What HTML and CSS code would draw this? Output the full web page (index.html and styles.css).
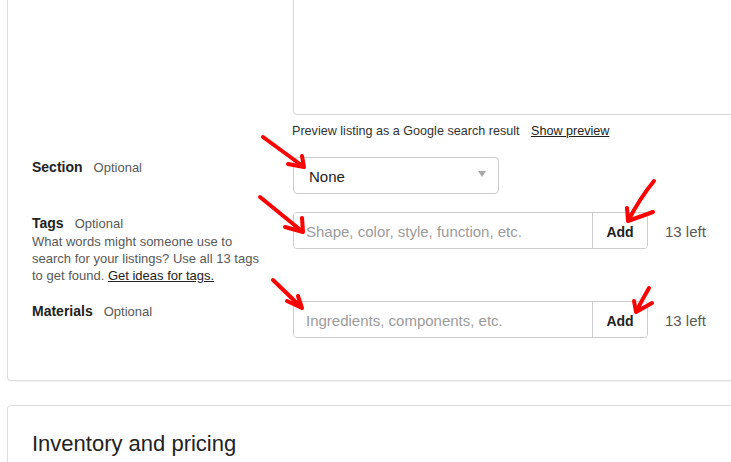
FILE: index.html
```html
<!DOCTYPE html>
<html lang="en">
<head>
<meta charset="utf-8">
<title>Listing details</title>
<link rel="stylesheet" href="styles.css">
</head>
<body>
<div class="page">
  <section class="card card-details">
    <div class="row row-desc">
      <div class="label-col"></div>
      <div class="field-col">
        <textarea class="textarea" aria-label="Description"></textarea>
        <p class="preview">Preview listing as a Google search result <a class="link" href="#">Show preview</a></p>
      </div>
    </div>

    <div class="row">
      <div class="label-col">
        <div class="label"><span class="label-name">Section</span><span class="optional">Optional</span></div>
      </div>
      <div class="field-col">
        <div class="select">
          <span class="select-value">None</span>
          <span class="caret"></span>
        </div>
      </div>
    </div>

    <div class="row row-tags">
      <div class="label-col">
        <div class="label"><span class="label-name">Tags</span><span class="optional">Optional</span></div>
        <p class="help">What words might someone use to search for your listings? Use all 13 tags to get found. <a class="link" href="#">Get ideas for tags.</a></p>
      </div>
      <div class="field-col">
        <div class="field-line">
          <div class="input-group">
            <input class="input" type="text" placeholder="Shape, color, style, function, etc.">
            <button class="add-btn" type="button">Add</button>
          </div>
          <span class="left">13 left</span>
        </div>
      </div>
    </div>

    <div class="row">
      <div class="label-col">
        <div class="label"><span class="label-name">Materials</span><span class="optional">Optional</span></div>
      </div>
      <div class="field-col">
        <div class="field-line">
          <div class="input-group">
            <input class="input" type="text" placeholder="Ingredients, components, etc.">
            <button class="add-btn" type="button">Add</button>
          </div>
          <span class="left">13 left</span>
        </div>
      </div>
    </div>
  </section>

  <section class="card card-inventory">
    <h2 class="card-title">Inventory and pricing</h2>
  </section>
</div>

<svg class="annotations" width="731" height="462" viewBox="0 0 731 462" aria-hidden="true">
  <g fill="none" stroke="#ff0000" stroke-width="4" stroke-linecap="round" stroke-linejoin="round">
    <path d="M263 137 L304 167 M302 156 L304 167 L288 164"/>
    <path d="M260 197 L303 232 M302 218 L303 232 L285 227"/>
    <path d="M273 280 L302 308 M298 296 L302 308 L287 301"/>
    <path d="M654 181 Q640 198 628 221 M627 208 L628 221 L653 212"/>
    <path d="M649 288 Q642 300 636 312 M634 301 L636 312 L652 303"/>
  </g>
</svg>
</body>
</html>
```

FILE: styles.css
```css
* {
  box-sizing: border-box;
}

html, body {
  margin: 0;
  padding: 0;
  background: #ffffff;
}

body {
  font-family: "Liberation Sans", Arial, sans-serif;
  color: #222222;
  width: 731px;
  height: 462px;
  overflow: hidden;
  position: relative;
}

.page {
  padding-left: 7px;
  margin-right: -60px;
}

.card {
  border: 1px solid #dddddd;
  border-radius: 4px;
  background: #ffffff;
  box-shadow: 0 1px 0 rgba(0, 0, 0, 0.04);
}

.card-details {
  margin-top: -40px;
  padding: 24px 24px 42px 24px;
}

.card-inventory {
  margin-top: 24px;
  padding: 24px 24px 24px 24px;
}

.row {
  display: grid;
  grid-template-columns: 261px 1fr;
  margin-bottom: 18px;
}

.row-tags {
  margin-bottom: 17px;
}

.row-tags .label-col {
  padding-top: 1px;
}

.row:last-child {
  margin-bottom: 0;
}

.field-col {
  min-width: 0;
}

.textarea {
  display: block;
  width: 100%;
  height: 130px;
  border: 1px solid #d6d6d6;
  border-radius: 4px;
  resize: none;
  background: #fff;
  margin: 0;
}

.preview {
  margin: 8px 0 0 -1px;
  font-size: 12.6px;
  line-height: 16px;
  color: #333333;
}

.preview .link {
  margin-left: 8px;
}

.link {
  color: #222222;
  text-decoration: underline;
}

.label {
  font-size: 14px;
  line-height: 20px;
  height: 20px;
}

.label-name {
  font-weight: bold;
  color: #222222;
}

.optional {
  font-size: 13px;
  line-height: 1;
  color: #595959;
  margin-left: 11px;
}

.help {
  margin: 0;
  width: 228px;
  font-size: 13px;
  line-height: 17px;
  color: #595959;
}

.select {
  width: 206px;
  height: 37px;
  border: 1px solid #cccccc;
  border-radius: 4px;
  display: flex;
  align-items: center;
  justify-content: space-between;
  padding: 0 12px 0 15px;
}

.select-value {
  font-size: 15px;
  color: #222222;
  padding-top: 1px;
}

.caret {
  width: 0;
  height: 0;
  border-left: 4.5px solid transparent;
  border-right: 4.5px solid transparent;
  border-top: 6px solid #aaaaaa;
  margin-top: -3px;
}

.field-line {
  display: flex;
  align-items: center;
}

.input-group {
  display: flex;
  width: 355px;
  height: 37px;
  border: 1px solid #cccccc;
  border-radius: 4px;
  overflow: hidden;
}

.input {
  flex: 1;
  min-width: 0;
  border: 0;
  outline: none;
  padding: 2px 12px 0 12px;
  font-family: "Liberation Sans", Arial, sans-serif;
  font-size: 15px;
  color: #222222;
  background: #fff;
}

.input::placeholder {
  color: #9b9b9b;
  opacity: 1;
}

.add-btn {
  width: 55px;
  border: 0;
  border-left: 1px solid #cccccc;
  background: #ffffff;
  font-family: "Liberation Sans", Arial, sans-serif;
  font-size: 14px;
  font-weight: bold;
  color: #222222;
  padding: 3px 0 0 0;
}

.left {
  margin-left: 17px;
  padding-top: 2px;
  font-size: 15px;
  color: #595959;
}

.card-title {
  margin: 0;
  font-size: 22px;
  line-height: 28px;
  font-weight: normal;
  color: #222222;
}

.annotations {
  position: absolute;
  left: 0;
  top: 0;
  pointer-events: none;
}
```
